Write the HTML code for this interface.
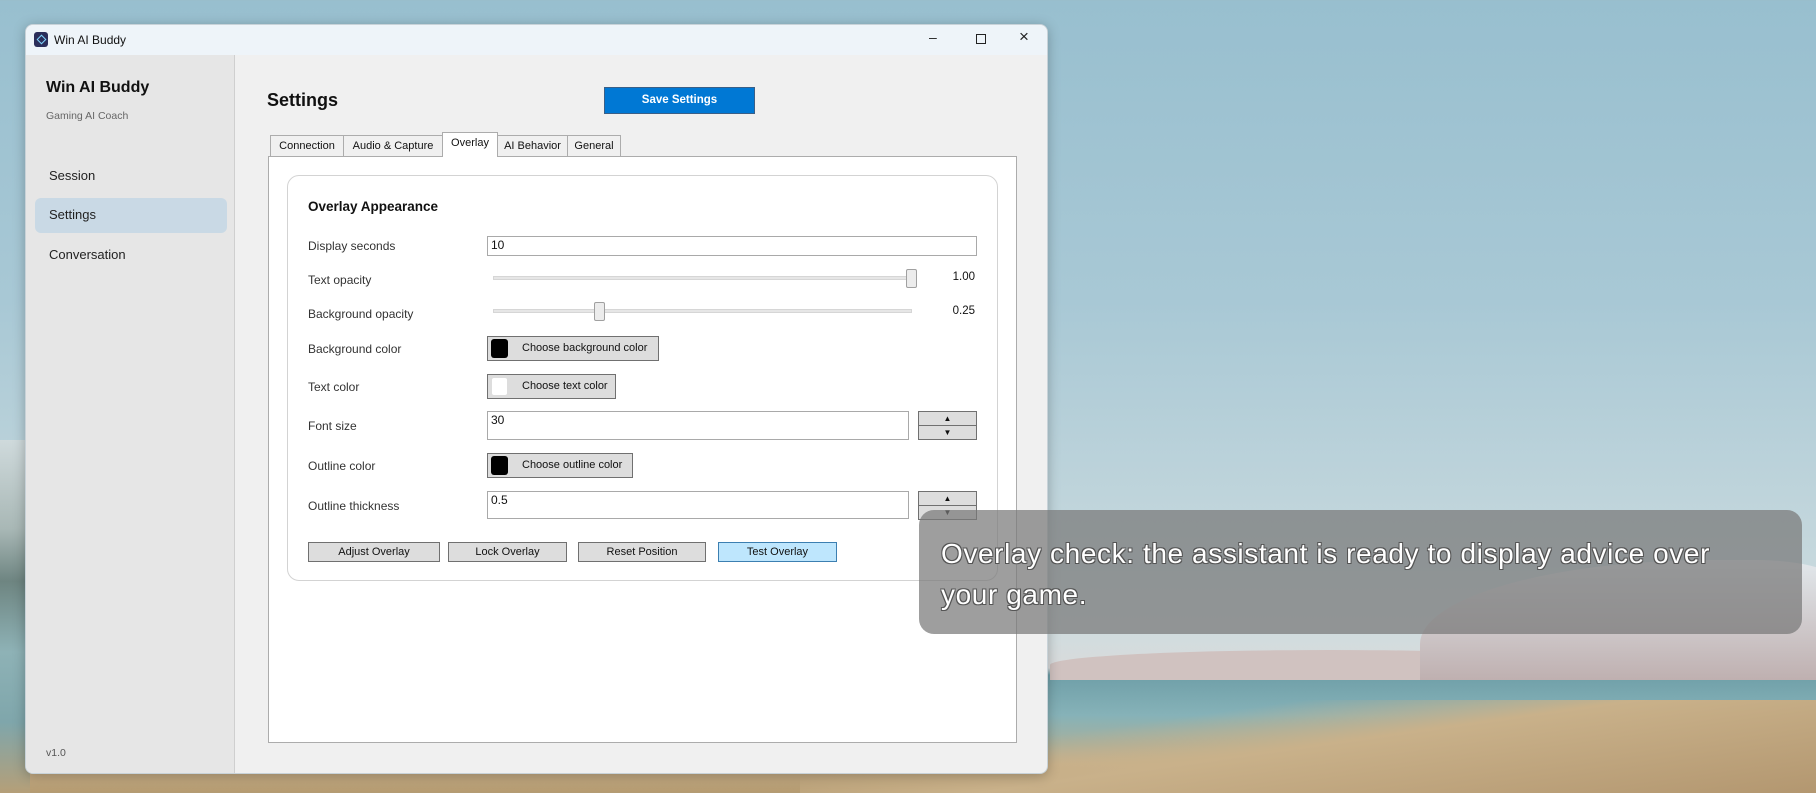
<!DOCTYPE html>
<html><head><meta charset="utf-8"><style>
*{box-sizing:border-box;margin:0;padding:0}
body{width:1816px;height:793px;overflow:hidden;position:relative;font-family:"Liberation Sans",sans-serif;white-space:nowrap;
background:linear-gradient(180deg,#98bfcf 0px,#a8c8d5 300px,#c6d8dd 560px,#d2dcde 640px,#d9dadb 668px,#6f9fa8 675px,#86b2b8 715px,#a7b09d 745px,#c8b08a 765px,#b49a70 793px);}
.hill{position:absolute;left:1420px;top:560px;width:420px;height:120px;background:linear-gradient(180deg,#e2e8ec,#bfb0b0);border-radius:70% 20% 0 0;}
.hill2{position:absolute;left:1050px;top:650px;width:560px;height:30px;background:#d0c2c0;border-radius:50% 50% 0 0;}
.grass{position:absolute;left:800px;top:700px;width:1016px;height:93px;background:linear-gradient(172deg,transparent 30%,#c9b18a 50%,#b39770);}
.lefts{position:absolute;left:0;top:440px;width:30px;height:353px;background:linear-gradient(180deg,#cfdadc,#a9b8b6 25%,#6e8581 40%,#8eb2b6 60%,#7fa6ab 80%,#b59f78);}
.win{position:absolute;left:25px;top:24px;width:1023px;height:750px;background:#f0f0f0;border-radius:8px;overflow:hidden;box-shadow:0 2px 12px rgba(0,0,0,.25);border:1px solid #c8d2d8}
.title{height:30px;background:#eef4f9;position:relative;font-size:12px;color:#111}
.title .ic{position:absolute;left:8px;top:7px;width:14px;height:15px;background:#2b2e5a;border-radius:3px}
.title .ic:after{content:"";position:absolute;left:4px;top:4px;width:5px;height:5px;border:1px solid #7fd6ff;transform:rotate(45deg)}
.title .t{position:absolute;left:28px;top:8px}
.ctl{position:absolute;top:4px;font-size:14px;color:#222}
.side{position:absolute;left:0;top:30px;width:209px;bottom:0;background:#e6e6e6;border-right:1px solid #cfcfcf}
.side .h{position:absolute;left:20px;top:24px;font-size:16px;font-weight:bold;color:#111}
.side .s{position:absolute;left:20px;top:55px;font-size:10.5px;color:#666}
.nav{position:absolute;left:23px;font-size:13px;color:#222}
.sel{position:absolute;left:9px;top:143px;width:192px;height:35px;background:#c9d9e5;border-radius:6px}
.ver{position:absolute;left:20px;font-size:10.5px;color:#555}
.a{position:absolute}
.tab{position:absolute;top:110px;height:22px;background:#f0f0f0;border:1px solid #acacac;font-size:11px;color:#111;padding:4px 0 0;text-align:center}
.panel{position:absolute;left:242px;top:131px;width:749px;height:587px;background:#fff;border:1px solid #acacac}
.card{position:absolute;left:261px;top:150px;width:711px;height:406px;border:1px solid #d3d3d3;border-radius:12px;background:#fff}
.lbl{position:absolute;left:282px;font-size:12px;color:#333}
.inp{position:absolute;left:461px;background:#fff;border:1px solid #a9a9a9;font-size:12px;padding:1px 3px;color:#111}
.track{position:absolute;left:467px;width:419px;height:4px;background:#e6e6e6;border:1px solid #d6d6d6}
.thumb{position:absolute;width:11px;height:19px;background:#ececec;border:1px solid #a0a0a0;border-radius:2px}
.val{position:absolute;right:72px;font-size:11.5px;color:#111}
.cbtn{position:absolute;left:461px;height:25px;background:#dddddd;border:1px solid #707070;font-size:11px;color:#111;padding:5px 0 0 34px;overflow:hidden}
.cbtn i{position:absolute;left:3px;top:2px;width:17px;height:19px;border-radius:3px;background:#000}
.spin{position:absolute;left:892px;width:59px;height:29px;border:1px solid #707070;background:#dddddd}
.spin div{height:50%;text-align:center;font-size:8px;line-height:13px;color:#111}
.spin div:first-child{border-bottom:1px solid #707070}
.btn{position:absolute;top:517px;height:20px;background:#dddddd;border:1px solid #707070;font-size:11px;color:#111;text-align:center;line-height:18px}
.toast{position:absolute;left:919px;top:510px;width:883px;height:124px;border-radius:15px;background:rgba(120,120,120,.72);color:#fff;font-size:28px;line-height:41px;padding:23px 22px;text-shadow:1px 1px 0 #555,-1px -1px 0 #555,1px -1px 0 #555,-1px 1px 0 #555;letter-spacing:.6px}
</style></head><body>
<div class="lefts"></div><div class="hill2"></div><div class="hill"></div><div class="grass"></div>
<div class="win">
 <div class="title"><div class="ic"></div><div class="t">Win AI Buddy</div>
  <div class="ctl" style="left:903px">&#8211;</div>
  <div class="ctl" style="left:950px;top:9px;width:10px;height:10px;border:1.3px solid #222"></div>
  <div class="ctl" style="left:993px;top:2px;font-size:17px">&#215;</div>
 </div>
 <div class="side">
  <div class="h">Win AI Buddy</div><div class="s">Gaming AI Coach</div>
  <div class="nav" style="top:113px">Session</div>
  <div class="sel"></div>
  <div class="nav" style="top:152px">Settings</div>
  <div class="nav" style="top:192px">Conversation</div>
  <div class="ver" style="top:692px">v1.0</div>
 </div>
 <div class="a" style="left:241px;top:65px;font-size:18px;font-weight:bold;color:#111">Settings</div>
 <div class="a" style="left:578px;top:62px;width:151px;height:27px;background:#0078d4;border:1px solid #3a5f87;color:#fff;font-size:11.5px;font-weight:bold;text-align:center;line-height:25px">Save Settings</div>
 <div class="panel"></div>
 <div class="tab" style="left:244px;width:74px">Connection</div>
 <div class="tab" style="left:317px;width:100px">Audio &amp; Capture</div>
 <div class="tab" style="left:416px;width:56px;top:107px;height:25px;background:#fff;border-bottom:none">Overlay</div>
 <div class="tab" style="left:471px;width:71px">AI Behavior</div>
 <div class="tab" style="left:541px;width:54px">General</div>
 <div class="card"></div>
 <div class="a" style="left:282px;top:174px;font-size:13.5px;font-weight:bold;color:#111">Overlay Appearance</div>
 <div class="lbl" style="top:214px">Display seconds</div>
 <div class="inp" style="top:211px;width:490px;height:20px">10</div>
 <div class="lbl" style="top:248px">Text opacity</div>
 <div class="track" style="top:251px"></div><div class="thumb" style="left:880px;top:244px"></div>
 <div class="val" style="top:246px">1.00</div>
 <div class="lbl" style="top:282px">Background opacity</div>
 <div class="track" style="top:284px"></div><div class="thumb" style="left:568px;top:277px"></div>
 <div class="val" style="top:280px">0.25</div>
 <div class="lbl" style="top:317px">Background color</div>
 <div class="cbtn" style="top:311px;width:172px"><i></i>Choose background color</div>
 <div class="lbl" style="top:355px">Text color</div>
 <div class="cbtn" style="top:349px;width:129px"><i style="background:#fff;border:1px solid #ddd"></i>Choose text color</div>
 <div class="lbl" style="top:394px">Font size</div>
 <div class="inp" style="top:386px;width:422px;height:29px">30</div>
 <div class="spin" style="top:386px"><div>&#9650;</div><div>&#9660;</div></div>
 <div class="lbl" style="top:434px">Outline color</div>
 <div class="cbtn" style="top:428px;width:146px"><i></i>Choose outline color</div>
 <div class="lbl" style="top:474px">Outline thickness</div>
 <div class="inp" style="top:466px;width:422px;height:28px">0.5</div>
 <div class="spin" style="top:466px"><div>&#9650;</div><div>&#9660;</div></div>
 <div class="btn" style="left:282px;width:132px">Adjust Overlay</div>
 <div class="btn" style="left:422px;width:119px">Lock Overlay</div>
 <div class="btn" style="left:552px;width:128px">Reset Position</div>
 <div class="btn" style="left:692px;width:119px;background:#bee6fd;border-color:#3c7fb1">Test Overlay</div>
</div>
<div class="toast">Overlay check: the assistant is ready to display advice over<br>your game.</div>
</body></html>
